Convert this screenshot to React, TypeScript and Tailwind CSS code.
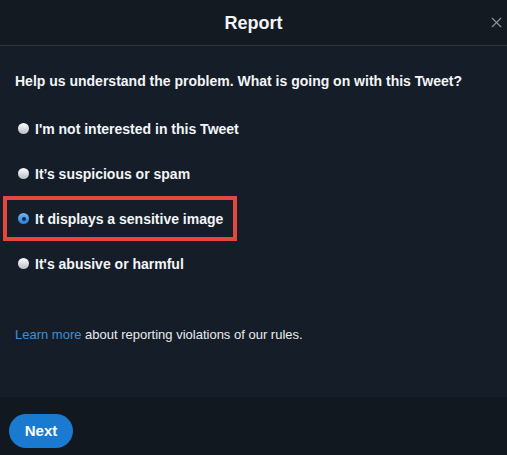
import { X } from "lucide-react";

const options = [
  "I'm not interested in this Tweet",
  "It’s suspicious or spam",
  "It displays a sensitive image",
  "It's abusive or harmful",
];

export default function App() {
  const selected = 2;
  return (
    <div
      className="w-[507px] h-[455px] flex flex-col bg-[#151e28] text-white overflow-hidden"
      style={{ fontFamily: "'Liberation Sans', Arial, sans-serif" }}
    >
      <header className="h-[46px] shrink-0 relative flex items-center justify-center bg-[#131a22] border-b border-[#2c3640]">
        <h1 className="text-[18px] font-bold text-[#f2f4f6] mt-[2px]">Report</h1>
        <button className="absolute right-[2px] top-[14px] text-[#8b96a1]" aria-label="Close">
          <X size={17} strokeWidth={1.6} />
        </button>
      </header>

      <main className="flex-1 px-[15px] pt-[27px]">
        <p className="text-[14px] font-bold text-[#f3f5f7] leading-4">
          Help us understand the problem. What is going on with this Tweet?
        </p>
        <ul className="mt-[17px] flex flex-col">
          {options.map((label, i) =>
            i === selected ? (
              <li
                key={label}
                className="-ml-[12px] h-[45px] w-[234px] border-4 border-[#e5463e] flex items-center pl-[11px]"
              >
                <Radio checked />
                <span className="ml-[6px] text-[14px] font-bold text-[#f3f5f7] leading-4">{label}</span>
              </li>
            ) : (
              <li key={label} className="h-[45px] flex items-center pl-[3px]">
                <Radio />
                <span className="ml-[6px] text-[14px] font-bold text-[#f3f5f7] leading-4">{label}</span>
              </li>
            )
          )}
        </ul>
        <p className="mt-[41px] text-[13px] text-[#e8ebee] leading-4">
          <a className="text-[#3f8fd6]">Learn more</a> about reporting violations of our rules.
        </p>
      </main>

      <footer className="h-[58px] shrink-0 bg-[#12181f] px-[9px] pt-[17px]">
        <button className="h-[34px] w-[64px] rounded-full bg-[#1a7ad0] text-[15px] font-bold text-white">
          Next
        </button>
      </footer>
    </div>
  );
}

function Radio({ checked = false }: { checked?: boolean }) {
  return checked ? (
    <span className="w-[11px] h-[11px] shrink-0 rounded-full bg-gradient-to-b from-[#6fb3f2] to-[#2a7fd6] flex items-center justify-center">
      <span className="w-[4px] h-[4px] rounded-full bg-[#0d2a4a]" />
    </span>
  ) : (
    <span className="w-[11px] h-[11px] shrink-0 rounded-full bg-gradient-to-b from-[#ffffff] to-[#b9bec4]" />
  );
}
